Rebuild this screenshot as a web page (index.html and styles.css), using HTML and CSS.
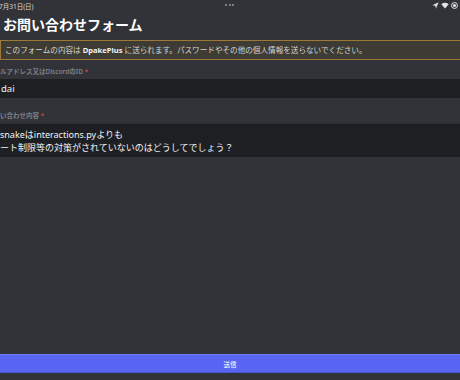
FILE: index.html
```html
<!DOCTYPE html>
<html lang="ja">
<head>
  <meta charset="UTF-8"/>
  <meta name="viewport" content="width=device-width,initial-scale=1"/>
  <title>お問い合わせフォーム</title>
  <link rel="stylesheet" href="styles.css">
</head>
<body>
  <div class="status-bar">
    <span class="date">7月31日(日)</span>
    <span class="dots"><i></i><i></i><i></i></span>
    <span class="status-icons">
      <svg width="7" height="7" viewBox="0 0 10 10"><path d="M9.5 0.5 L0.5 4.5 L4.8 5.2 L5.5 9.5 Z" fill="#e6e6e6"/></svg>
      <svg width="8" height="7" viewBox="0 0 12 10"><path d="M6 9.5 L0.5 3.2 Q6 -1.2 11.5 3.2 Z" fill="#e6e6e6"/></svg>
      <svg width="7" height="7" viewBox="0 0 10 10"><circle cx="5" cy="5" r="4.2" fill="none" stroke="#e6e6e6" stroke-width="1.4"/><circle cx="5" cy="5" r="2.2" fill="#e6e6e6"/></svg>
    </span>
  </div>

  <h1 class="title">お問い合わせフォーム</h1>

  <div class="notice">このフォームの内容は <b>DpakePlus</b> に送られます。パスワードやその他の個人情報を送らないでください。</div>

  <div class="field">
    <label class="field-label">ルアドレス又はDiscordのID <span class="req">*</span></label>
    <div class="input">dai</div>
  </div>

  <div class="field">
    <label class="field-label">い合わせ内容 <span class="req">*</span></label>
    <div class="textarea">snakeはinteractions.pyよりも<br>ート制限等の対策がされていないのはどうしてでしょう？</div>
  </div>

  <div class="footer">
    <button class="submit">送信</button>
  </div>
</body>
</html>
```

FILE: styles.css
```css
:root {
  --bg:        #313338;
  --input-bg:  #1e1f22;
  --text:      #e3e5e8;
  --muted:     #7d8087;
  --blurple:   #5865f2;
  --warn-bg:   #3d3b33;
  --warn-line: #9c7a36;
}
html, body {height:100%}
body {margin:0;height:380px;overflow:hidden;background:var(--bg);color:var(--text);
      font-family:"Noto Sans","Noto Sans CJK JP",sans-serif;
      display:flex;flex-direction:column}

.status-bar {height:11px;display:flex;align-items:center;justify-content:space-between;
             padding:0 2px 0 0;font-size:6.5px;color:#dcdcdc;position:relative}
.status-bar .date {margin-left:-1px}
.dots {position:absolute;left:225px;top:4px;display:flex;gap:1.5px}
.dots i {width:2px;height:2px;border-radius:50%;background:#9a9a9a;display:block}
.status-icons {display:flex;gap:2px;align-items:center}

.title {margin:2px 0 4px 3px;font-size:14px;line-height:23px;font-weight:700;color:#fff}

.notice {background:var(--warn-bg);border:1px solid var(--warn-line);border-right:0;
         padding:0 4px;height:18px;line-height:18px;font-size:7.6px;color:#d4d5d7;
         white-space:nowrap}
.notice b {font-weight:700;color:#f2f2f2}

.field {margin-top:6px}
.field-label {display:block;font-size:6.5px;font-weight:600;line-height:11px;
              color:var(--muted);margin-bottom:2px}
.req {color:#c84448}
.input {background:var(--input-bg);height:19px;line-height:19px;font-size:9.5px;
        padding-left:1px;color:#f2f3f5}
.field + .field {margin-top:12px}
.field + .field .field-label {margin-bottom:2px}
.textarea {background:var(--input-bg);border-top:1px solid #2b2d31;padding:4px 0 5px 0;
           font-size:9px;line-height:13px;color:#f2f3f5;height:24px}

.footer {margin-top:auto;padding-bottom:7px}
.submit {display:block;width:100%;height:19px;margin:0;padding:0;border:0;
         border-top:1px solid #6f7af5;border-bottom:1px solid #4a55d0;
         background:var(--blurple);color:#fff;font-family:inherit;font-size:6.5px}
```
